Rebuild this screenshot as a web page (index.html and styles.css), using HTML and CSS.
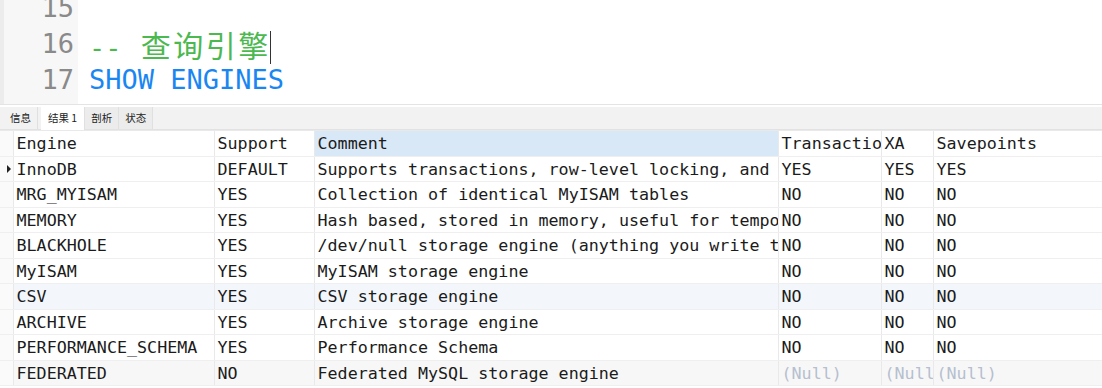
FILE: index.html
```html
<!DOCTYPE html>
<html lang="zh">
<head>
  <meta charset="UTF-8">
  <title>SHOW ENGINES</title>
  <link rel="stylesheet" href="styles.css">
</head>
<body>
  <div class="editor">
    <div class="gutter">
      <div class="ln">15</div>
      <div class="ln">16</div>
      <div class="ln">17</div>
      <div class="ln">18</div>
    </div>
    <div class="code">
      <div class="line">&nbsp;</div>
      <div class="line comment">-- <span class="cjk">查询引擎</span><span class="caret"></span></div>
      <div class="line keyword">SHOW ENGINES</div>
      <div class="line">&nbsp;</div>
    </div>
  </div>

  <div class="tabs">
    <div class="tab">信息</div>
    <div class="tab active">结果 1</div>
    <div class="tab">剖析</div>
    <div class="tab">状态</div>
  </div>

  <table class="grid">
    <colgroup>
      <col style="width:13px">
      <col style="width:201px">
      <col style="width:100px">
      <col style="width:464px">
      <col style="width:103px">
      <col style="width:52px">
      <col>
    </colgroup>
    <thead>
      <tr>
        <th class="mark"></th>
        <th>Engine</th>
        <th>Support</th>
        <th class="sorted">Comment</th>
        <th>Transactions</th>
        <th>XA</th>
        <th>Savepoints</th>
      </tr>
    </thead>
    <tbody>
      <tr>
        <td class="mark"><span class="arrow"></span></td>
        <td>InnoDB</td><td>DEFAULT</td>
        <td>Supports transactions, row-level locking, and foreign keys</td>
        <td>YES</td><td>YES</td><td>YES</td>
      </tr>
      <tr>
        <td class="mark"></td>
        <td>MRG_MYISAM</td><td>YES</td>
        <td>Collection of identical MyISAM tables</td>
        <td>NO</td><td>NO</td><td>NO</td>
      </tr>
      <tr>
        <td class="mark"></td>
        <td>MEMORY</td><td>YES</td>
        <td>Hash based, stored in memory, useful for temporary tables</td>
        <td>NO</td><td>NO</td><td>NO</td>
      </tr>
      <tr>
        <td class="mark"></td>
        <td>BLACKHOLE</td><td>YES</td>
        <td>/dev/null storage engine (anything you write to it disappears)</td>
        <td>NO</td><td>NO</td><td>NO</td>
      </tr>
      <tr>
        <td class="mark"></td>
        <td>MyISAM</td><td>YES</td>
        <td>MyISAM storage engine</td>
        <td>NO</td><td>NO</td><td>NO</td>
      </tr>
      <tr class="hover">
        <td class="mark"></td>
        <td>CSV</td><td>YES</td>
        <td>CSV storage engine</td>
        <td>NO</td><td>NO</td><td>NO</td>
      </tr>
      <tr>
        <td class="mark"></td>
        <td>ARCHIVE</td><td>YES</td>
        <td>Archive storage engine</td>
        <td>NO</td><td>NO</td><td>NO</td>
      </tr>
      <tr>
        <td class="mark"></td>
        <td>PERFORMANCE_SCHEMA</td><td>YES</td>
        <td>Performance Schema</td>
        <td>NO</td><td>NO</td><td>NO</td>
      </tr>
      <tr class="last">
        <td class="mark"></td>
        <td>FEDERATED</td><td>NO</td>
        <td>Federated MySQL storage engine</td>
        <td class="null">(Null)</td><td class="null">(Null)</td><td class="null">(Null)</td>
      </tr>
    </tbody>
  </table>
</body>
</html>
```

FILE: styles.css
```css
:root {
  --grid-line: #e9e9e9;
  --text: #1b1b1b;
  --mono: "DejaVu Sans Mono", "Liberation Mono", monospace;
}

body {
  margin: 0;
  width: 1102px;
  height: 388px;
  overflow: hidden;
  background: #fff;
  color: var(--text);
}

/* editor */
.editor {
  display: flex;
  height: 104px;
  overflow: hidden;
  border-bottom: 1px solid #e4e4e4;
  font-family: var(--mono);
  font-size: 27px;
}

.gutter {
  width: 70px;
  padding-right: 4px;
  margin-top: -10px;
  background: #f7f7f7;
  border-left: 4px solid #ececec;
  text-align: right;
  color: #8a8a8a;
}

.code {
  margin-top: -10px;
  padding-left: 11px;
}

.ln,
.line {
  height: 36px;
  line-height: 36px;
  white-space: pre;
}

.comment {
  color: #4cb850;
}

.cjk {
  margin-left: 3px;
  font-family: "Noto Sans CJK SC", sans-serif;
  font-size: 30px;
  letter-spacing: 2.5px;
}

.caret {
  display: inline-block;
  width: 1px;
  height: 33px;
  margin-left: -1px;
  vertical-align: -7px;
  background: #333;
}

.keyword {
  color: #1a86f2;
}

/* result tabs */
.tabs {
  display: flex;
  height: 22px;
  margin-top: 2px;
  padding-left: 4px;
  background: #f2f2f2;
  border-bottom: 1px solid #e2e2e2;
  font-family: "Noto Sans CJK SC", sans-serif;
  font-size: 10.5px;
}

.tab {
  padding: 0 6px;
  line-height: 22px;
  color: #222;
  background: #ececec;
  border-right: 1px solid #e0e0e0;
}

.tab:first-child {
  background: transparent;
  margin-right: 3px;
}

.tab.active {
  background: #fff;
  padding: 0 7px;
  height: 23px;
}

/* result grid */
.grid {
  width: 1102px;
  border-collapse: collapse;
  table-layout: fixed;
  font-family: var(--mono);
  font-size: 16.7px;
}

.grid th,
.grid td {
  height: 24.5px;
  padding: 0 0 0 3px;
  text-align: left;
  font-weight: normal;
  white-space: nowrap;
  overflow: hidden;
  border-left: 1px solid var(--grid-line);
  border-bottom: 1px solid #efefef;
}

.grid th {
  border-top: 1px solid var(--grid-line);
}

.grid .mark {
  padding: 0;
  border-left: none;
  background: #fafafa;
}

.grid th.sorted {
  background: #d9e8f7;
}

.arrow {
  display: block;
  width: 0;
  height: 0;
  margin-left: 7px;
  border-top: 4px solid transparent;
  border-bottom: 4px solid transparent;
  border-left: 4px solid #222;
}

.grid tr.hover td {
  background: #f3f7fc;
}

.grid tr.hover td.mark,
.grid tr.last td.mark {
  background: #fafafa;
}

.grid tr.last td {
  background: #f7f7f7;
}

.grid td.null {
  color: #b6bfcf;
}
```
